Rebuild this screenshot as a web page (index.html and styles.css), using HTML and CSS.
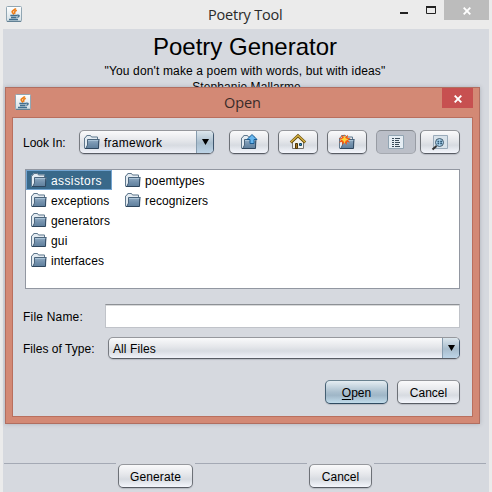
FILE: index.html
```
<!DOCTYPE html>
<html lang="en">
<head>
<meta charset="utf-8">
<title>Poetry Tool</title>
<link rel="stylesheet" href="styles.css">
</head>
<body>
<svg class="defs" width="0" height="0">
  <defs>
    <linearGradient id="blue" x1="0" y1="0" x2="0" y2="1"><stop offset="0" stop-color="#93adc4"/><stop offset=".5" stop-color="#7391ad"/><stop offset="1" stop-color="#5f7f9c"/></linearGradient>
    <linearGradient id="tile" x1="0" y1="0" x2="0" y2="1"><stop offset="0" stop-color="#fff"/><stop offset="1" stop-color="#d3dfe5"/></linearGradient>
    <symbol id="folder" viewBox="0 0 16 16">
      <path d="M.5 14.500V3.500L2 2.500l.8-1.500h3.500l1 1.500h6.200v3L11.500 14.500z" fill="#e3ebf1"/>
      <path d="M.5 14.500V4L2 3l.8-1.500h3.700l1 1.500h6v2.500" fill="none" stroke="#60788d"/>
      <path d="M1.500 14.500L3.500 11V5.500h12L14.500 14.500z" fill="url(#blue)"/>
      <path d="M1 14.500h13.500l.3-9" fill="none" stroke="#2e465e"/>
      <path d="M2 14l1.500-3V5.500h12" fill="none" stroke="#4a647c"/>
      <path d="M4 6.500h10.300" stroke="#a9c2d6"/>
    </symbol>
    <symbol id="java" viewBox="0 0 16 16">
      <rect x=".5" y=".5" width="15" height="15" rx="1" fill="url(#tile)" stroke="#91a6b3"/>
      <path d="M1 15.3h14" stroke="#58788d"/>
      <path d="M9.500 2.200C9.500 4.200 5 4.700 6.400 6.500L8 8.500M10.800 4.300C8.500 5.300 8.200 6 9 7.800" fill="none" stroke="#ed7d16" stroke-width="1.600"/>
      <path d="M4.300 9.500h7M5 11.500h5.500M3 13.500h9M11.300 9.200c2.800-.4 2.200 1.700 0 2.100" fill="none" stroke="#42708f" stroke-width="1.300"/>
    </symbol>
    <symbol id="cross" viewBox="0 0 8 8"><path d="M.7.7l6.600 6.600M7.300.7L.7 7.300" stroke="#fff" stroke-width="1.900"/></symbol>
  </defs>
</svg>
<div class="window">
  <header class="titlebar">
    <svg class="java"><use href="#java"/></svg>
    <span class="window-title">Poetry Tool</span>
    <svg class="controls" width="44" height="20"><path d="M4 13h8" stroke="#222" stroke-width="2"/><path d="M30.500 6.500h9v7h-9z" fill="none" stroke="#222"/><path d="M30 7h10" stroke="#222" stroke-width="2"/></svg>
    <span class="close"><svg><use href="#cross"/></svg></span>
  </header>
  <main class="content">
    <h1>Poetry Generator</h1>
    <p class="quote">"You don't make a poem with words, but with ideas"</p>
    <p class="author">Stephanie Mallarme</p>
    <footer class="footer">
      <i class="rule"></i><button class="btn generate">Generate</button><i class="rule"></i><button class="btn">Cancel</button><i class="rule"></i>
    </footer>
  </main>
</div>
<section class="dialog">
  <header class="dialog-head">
    <svg class="java"><use href="#java"/></svg>
    <span class="dialog-title">Open</span>
    <span class="dialog-close"><svg><use href="#cross"/></svg></span>
  </header>
  <div class="panel">
    <div class="toolbar">
      <span class="label look">Look In:</span>
      <div class="combo place"><svg class="icon"><use href="#folder"/></svg><span class="value framework">framework</span><span class="arrow"><svg viewBox="0 0 7 6"><path d="M0 0h7L3.500 6z"/></svg></span></div>
      <button class="btn tool up"><svg class="icon"><use href="#folder"/><path d="M11 .5l5 5h-3v4h-4v-4h-3z" fill="#68b7ee" stroke="#195d96"/></svg></button>
      <button class="btn tool"><svg class="icon"><path d="M2.500 8L8 3l5.500 5v6.500h-11z" fill="#f3f3ee" stroke="#73716b"/><path d="M.8 8.500L8 1.700l7.200 6.800" fill="none" stroke="#6b500b" stroke-width="3"/><path d="M1 8L8 1.600 15 8" fill="none" stroke="#d7b344" stroke-width="1.400"/><path d="M5.500 9.500h2v5h-2z" fill="#a57726" stroke="#513806"/><path d="M9.500 9.500h2v2h-2z" fill="#348fca" stroke="#17445f"/></svg></button>
      <button class="btn tool"><svg class="icon"><use href="#folder"/><path d="M5 0l1.200 3L9 .8 8.500 4l3.200.3-2.600 1.900 2 2.500-3-.7L7.500 11 5.500 8.500 3.500 11 3 7.900 0 8.500l1.800-2.400L0 4.200l2.800-.3L2 1l2.600 1.700z" fill="#f05a16"/><path d="M5.500 1.500l1.200 2.700 2.700 1.300-2.700 1.200-1.200 2.700-1.200-2.700-2.700-1.200 2.700-1.300z" fill="#ffd43b"/></svg></button>
      <button class="btn tool pressed"><svg class="icon"><path d="M.5 1.500h15v13H.5z" fill="#e5edf3" stroke="#91a4b2"/><path d="M4 4.500h2m1 0h5M4 6.500h2m1 0h4M4 8.500h2m1 0h5M4 10.500h2m1 0h4M4 12.500h2m1 0h5" stroke="#394a57"/></svg></button>
      <button class="btn tool last"><svg class="icon"><path d="M1.500 1.500h14v13h-14z" fill="#d8e2ea" stroke="#9aabba"/><path d="M4.500 12l-4 3.500" stroke="#343434" stroke-width="2"/><circle cx="7.500" cy="8.500" r="4" fill="#a9d0eb" stroke="#41596b"/><path d="M5.500 7.500h1.700m1 0H10M5.500 9.500h1.700m1 0H10" stroke="#2f5874" stroke-width="1.300"/></svg></button>
    </div>
    <div class="files">
      <div class="file selected"><svg class="icon"><use href="#folder"/></svg><span class="s-assist">assistors</span></div>
      <div class="file"><svg class="icon"><use href="#folder"/></svg><span class="s-except">exceptions</span></div>
      <div class="file"><svg class="icon"><use href="#folder"/></svg><span>generators</span></div>
      <div class="file"><svg class="icon"><use href="#folder"/></svg><span>gui</span></div>
      <div class="file"><svg class="icon"><use href="#folder"/></svg><span class="s-int">interfaces</span></div>
      <div class="file"><svg class="icon"><use href="#folder"/></svg><span class="s-poem">poemtypes</span></div>
      <div class="file"><svg class="icon"><use href="#folder"/></svg><span class="s-rec">recognizers</span></div>
    </div>
    <div class="field-row"><span class="label name-label">File Name:</span><input class="field" aria-label="File name"></div>
    <div class="field-row type-row"><span class="label type-label">Files of Type:</span><div class="combo type"><span class="value all">All Files</span><span class="arrow"><svg viewBox="0 0 7 6"><path d="M0 0h7L3.500 6z"/></svg></span></div></div>
    <div class="actions"><button class="btn primary"><span><u>O</u>pen</span></button><button class="btn">Cancel</button></div>
  </div>
</section>
</body>
</html>
```
FILE: styles.css
```
* { box-sizing: border-box; }
body { margin: 0; width: 492px; height: 492px; overflow: hidden; position: relative; background: #ebebeb; color: #000; font: 12px/16px "Liberation Sans", Arial, sans-serif; }
svg { display: block; flex: none; }
.defs { position: absolute; }
.window { height: 492px; display: flex; flex-direction: column; }
.titlebar { height: 29px; flex: none; display: flex; padding: 0 3px 0 6px; }
.java { width: 16px; height: 16px; margin-top: 6px; }
.window-title { width: 74px; margin: 4px 0 0 186px; font: 14.5px/21px "Open Sans", sans-serif; letter-spacing: -.22px; white-space: nowrap; color: #292929; }
.controls { margin-left: 114px; }
.close { width: 45px; height: 20px; margin-left: auto; background: #bcbcbc; display: flex; align-items: center; justify-content: center; }
.close svg, .dialog-close svg { width: 8px; height: 8px; margin-top: 1px; }
.content { flex: 1; margin: 0 3px; padding: 0 3px 0 1px; background: #d6d9df; display: flex; flex-direction: column; text-align: center; }
h1 { font-size: 24px; line-height: 28px; font-weight: normal; margin: 4px 0 2px; }
p { margin: 0; white-space: nowrap; }
.quote { letter-spacing: .14px; }
.author { letter-spacing: .1px; padding-left: 3px; }
.footer { margin-top: auto; height: 29px; display: flex; gap: 2px; }
.rule { flex: 1; height: 1px; background: #a4a9b4; }
.btn { width: 63px; height: 24px; padding: 1px 0 0; flex: none; font: 12px/16px "Liberation Sans", Arial, sans-serif; display: flex; align-items: center; justify-content: center; color: #000; border: 1px solid #8b8e94; border-color: #96989d #6d7177 #585c64; border-radius: 5px; background: linear-gradient(#fafafb, #e4e6ea 45%, #d7dbe1 65%, #f4f6fc); box-shadow: 0 1px 1px #b7bbc3; }
.footer .btn { margin-top: 1px; }
.footer .generate { width: 75px; letter-spacing: .1px; }
.dialog { position: absolute; left: 5px; top: 87px; width: 475px; height: 337px; padding: 0 6px 6px; border: 1px solid #b16e60; background: #d38975; box-shadow: 0 0 4px #747b8777; }
.dialog-head { display: flex; height: 29px; padding-left: 3px; }
.dialog-title { margin: 4px 0 0 193px; width: 38px; font: 14.5px/21px "Open Sans", sans-serif; letter-spacing: -.1px; color: #392b29; }
.dialog-close { margin-left: auto; width: 31px; height: 20px; background: #c75050; display: flex; align-items: center; justify-content: center; }
.panel { height: 300px; padding: 12px 12px 0 10px; background: #d6d9df; border: 1px solid #b96f5e; display: flex; flex-direction: column; }
.toolbar { display: flex; height: 24px; }
.label { white-space: nowrap; }
.look { width: 56px; padding-top: 5px; }
.icon { width: 16px; height: 16px; overflow: visible; }
.combo { display: flex; align-items: center; overflow: hidden; border: 1px solid #8b8e94; border-color: #96989d #3f566d #585c64 #777b81; border-radius: 5px; background: linear-gradient(#fafafb, #e4e6ea 45%, #d7dbe1 65%, #f0f2f9); box-shadow: 0 1px 1px #b7bbc3; }
.place { width: 135px; height: 24px; padding-left: 4px; }
.combo .value { margin-left: 4px; padding-top: 1px; }
.framework { letter-spacing: .25px; }
.all { letter-spacing: .1px; }
.arrow { margin-left: auto; width: 17px; height: 100%; display: flex; align-items: center; justify-content: center; border-left: 1px solid #869cae; background: linear-gradient(#dce6ed, #a8bdcd 55%, #bdd4e7); }
.arrow svg { width: 7px; height: 6px; }
.tool { width: 40px; margin-right: 9px; padding: 0; }
.up { margin-left: 15px; }
.pressed { margin-right: 4px; background: #bbbfc8; border-color: #85898f #989ca4 #a5a9b0; box-shadow: none; }
.last { margin-right: 0; }
.files { margin: 15px 0 0 2px; height: 120px; border: 1px solid #9297a1; background: #fff; display: grid; grid-auto-flow: column; grid-template-rows: repeat(5, 20px); grid-auto-columns: max-content; column-gap: 8px; align-content: start; }
.file { min-width: 86px; padding: 0 2px 0 5px; display: flex; align-items: center; gap: 4px; }
.file span { padding-top: 1px; letter-spacing: .17px; }
.selected { color: #fff; background: #39698a; border: 1px solid #73a4d1; padding: 0 1px 0 4px; }
.file .s-assist { letter-spacing: .4px; }
.file .s-except { letter-spacing: .1px; }
.file .s-int { letter-spacing: .1px; }
.file .s-poem, .file .s-rec { letter-spacing: .1px; }
.field-row { margin-top: 15px; height: 24px; display: flex; align-items: center; }
.name-label { width: 82px; padding-top: 2px; letter-spacing: .2px; }
.field { flex: 1; min-width: 0; height: 24px; padding: 2px 6px; border: 1px solid #c0c3c9; border-top-color: #8d9095; background: #fff; box-shadow: inset 0 1px #d8d9da; }
.type-row { margin-top: 9px; height: 22px; }
.type-label { width: 85px; padding-top: 2px; letter-spacing: .03px; }
.type { flex: 1; height: 22px; }
.actions { margin-top: 21px; display: flex; justify-content: flex-end; gap: 9px; }
.primary { border-color: #69818f #456073 #304a60; background: linear-gradient(#e5edf2, #aabfce 50%, #9fb6c7 65%, #c2dceb); }
.primary u { text-underline-offset: 2px; }
```
